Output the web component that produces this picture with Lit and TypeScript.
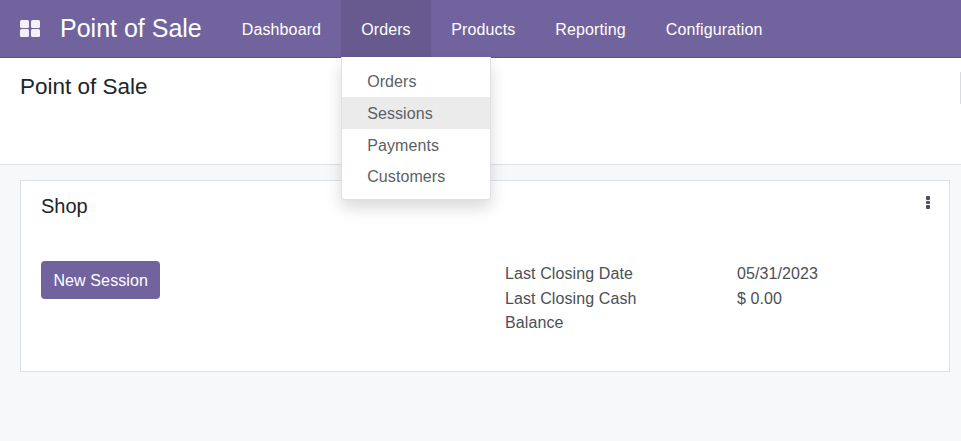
import { LitElement, html, css } from "lit";
import { customElement } from "lit/decorators.js";

@customElement("app-root")
export class AppRoot extends LitElement {
  static styles = css`
    :host {
      display: block;
      width: 961px;
      height: 441px;
      overflow: hidden;
      background: #f7f8fa;
      font-family: "Liberation Sans", Arial, sans-serif;
      font-size: 16px;
      letter-spacing: 0.1px;
      color: #4b4f56;
    }
    .nav {
      display: flex;
      height: 57px;
      background: #71639e;
      border-bottom: 1px solid #5f5286;
      color: #fff;
    }
    .apps {
      display: flex;
      align-items: center;
      padding: 0 20px;
    }
    .brand {
      display: flex;
      align-items: center;
      font-size: 25px;
      letter-spacing: 0;
      padding-right: 20px;
    }
    .item {
      position: relative;
      display: flex;
      align-items: center;
      padding: 2px 20px 0;
      letter-spacing: 0.12px;
    }
    .item.open {
      background: #665a8e;
      padding-right: 20.5px;
    }
    .menu {
      position: absolute;
      z-index: 2;
      top: 57px;
      left: 0;
      box-sizing: border-box;
      width: 150px;
      height: 143px;
      padding: 8px 0 0;
      background: #fff;
      border: 1px solid #dee2e6;
      border-top: none;
      border-radius: 0 0 4px 4px;
      box-shadow: 0 8px 16px rgba(0, 0, 0, 0.15);
      color: #5b5f66;
      letter-spacing: 0.1px;
    }
    .menu div {
      box-sizing: border-box;
      height: 32px;
      line-height: 32px;
      padding: 1px 0 0 25px;
    }
    .menu div:last-child {
      height: 31px;
      line-height: 30px;
    }
    .menu .active {
      background: #ebebeb;
    }
    .sub {
      box-sizing: border-box;
      display: flex;
      justify-content: space-between;
      height: 107px;
      padding: 14px 0 0 20px;
      background: #fff;
      border-bottom: 1px solid #dee2e6;
    }
    .title {
      font-size: 22.5px;
      letter-spacing: 0;
      line-height: 30px;
      color: #212529;
    }
    .stub {
      width: 1px;
      height: 32px;
      background: #d8dadd;
    }
    .content {
      padding: 15px 11px 0 20px;
    }
    .card {
      box-sizing: border-box;
      position: relative;
      height: 192px;
      padding: 13px 20px 0;
      background: #fff;
      border: 1px solid #dee2e6;
    }
    .name {
      font-size: 20px;
      letter-spacing: 0;
      line-height: 25px;
      color: #212529;
    }
    .kebab {
      position: absolute;
      top: 15px;
      right: 19px;
      display: flex;
      flex-direction: column;
      gap: 1px;
    }
    .kebab i {
      display: block;
      width: 4px;
      height: 3.5px;
      background: #4c4f5e;
      border-radius: 1px;
    }
    .row {
      display: flex;
      margin-top: 29px;
    }
    .left {
      width: 464px;
      padding-top: 13px;
    }
    .btn {
      display: inline-block;
      height: 38px;
      line-height: 40px;
      padding: 0 12.4px;
      background: #71639e;
      color: #fff;
      border-radius: 4px;
      letter-spacing: 0.12px;
    }
    .facts {
      display: grid;
      grid-template-columns: 232px 150px;
      grid-auto-rows: 24.5px;
      line-height: 24.5px;
      padding-top: 14px;
    }
    .label-wrap {
      width: 160px;
    }
  `;

  render() {
    return html`
      <div class="nav">
        <div class="apps">
          <svg width="20" height="18" viewBox="0 0 20 18" fill="#f3f1f8">
            <rect x="0" y="0" width="9" height="8" rx="1.5"></rect>
            <rect x="11" y="0" width="9" height="8" rx="1.5"></rect>
            <rect x="0" y="9" width="9" height="8" rx="1.5"></rect>
            <rect x="11" y="9" width="9" height="8" rx="1.5"></rect>
          </svg>
        </div>
        <div class="brand">Point of Sale</div>
        <div class="item">Dashboard</div>
        <div class="item open">
          Orders
          <div class="menu">
            <div>Orders</div>
            <div class="active">Sessions</div>
            <div>Payments</div>
            <div>Customers</div>
          </div>
        </div>
        <div class="item">Products</div>
        <div class="item">Reporting</div>
        <div class="item">Configuration</div>
      </div>
      <div class="sub">
        <div class="title">Point of Sale</div>
        <div class="stub"></div>
      </div>
      <div class="content">
        <div class="card">
          <div class="name">Shop</div>
          <div class="kebab"><i></i><i></i><i></i></div>
          <div class="row">
            <div class="left"><span class="btn">New Session</span></div>
            <div class="facts">
              <div>Last Closing Date</div>
              <div>05/31/2023</div>
              <div class="label-wrap">Last Closing Cash Balance</div>
              <div>$ 0.00</div>
            </div>
          </div>
        </div>
      </div>
    `;
  }
}
